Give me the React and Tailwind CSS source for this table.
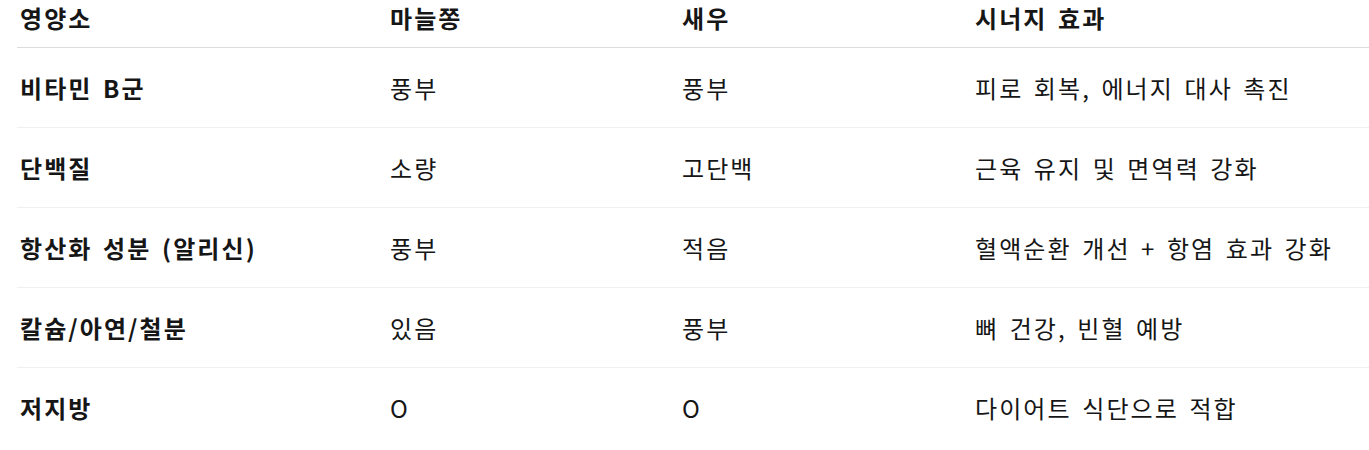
export default function App() {
  const rows = [
    ["비타민 B군", "풍부", "풍부", "피로 회복, 에너지 대사 촉진"],
    ["단백질", "소량", "고단백", "근육 유지 및 면역력 강화"],
    ["항산화 성분 (알리신)", "풍부", "적음", "혈액순환 개선 + 항염 효과 강화"],
    ["칼슘/아연/철분", "있음", "풍부", "뼈 건강, 빈혈 예방"],
    ["저지방", "O", "O", "다이어트 식단으로 적합"],
  ];
  const cols = "grid grid-cols-[373px_292px_293px_1fr]";
  return (
    <div
      className="w-[1369px] h-[450px] bg-white overflow-hidden text-[#161616] text-[24px] tracking-[2.1px] [word-spacing:3px] whitespace-nowrap"
      style={{ fontFamily: '"Noto Sans CJK KR", "Noto Sans", sans-serif' }}
    >
      <div className="ml-[17px]">
        <div className={`${cols} h-[48px] border-b border-[#dcdcdc] font-bold leading-[28px] pt-[4px]`}>
          <div className="pl-[3px]">영양소</div>
          <div>마늘쫑</div>
          <div>새우</div>
          <div>시너지 효과</div>
        </div>
        {rows.map((r, i) => (
          <div
            key={i}
            className={`${cols} h-[80px] items-center leading-[28px] ${i < rows.length - 1 ? "border-b border-[#f0f0f0]" : ""}`}
          >
            <div className="pl-[3px] font-bold">{r[0]}</div>
            <div>{r[1]}</div>
            <div>{r[2]}</div>
            <div>{r[3]}</div>
          </div>
        ))}
      </div>
    </div>
  );
}
